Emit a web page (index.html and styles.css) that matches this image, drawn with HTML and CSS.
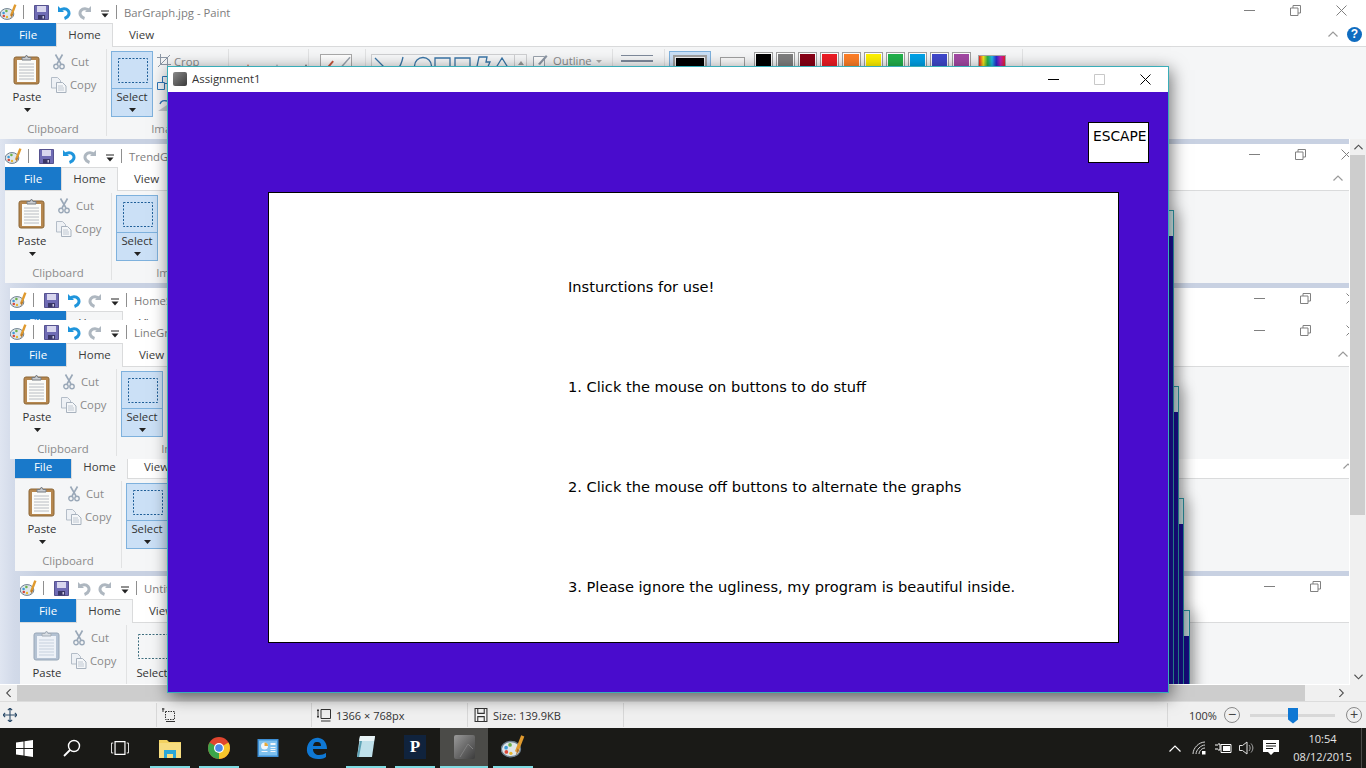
FILE: index.html
```html
<!DOCTYPE html>
<html lang="en">
<head>
<meta charset="utf-8">
<title>Assignment1</title>
<link rel="stylesheet" href="styles.css">
</head>
<body>
<svg class="defs" width="0" height="0" aria-hidden="true">
  <defs>
    <symbol id="i-palette" viewBox="0 0 17 17">
      <ellipse cx="7" cy="10" rx="6.8" ry="5.4" fill="#dfe6ea" stroke="#6d7f8e"/>
      <circle cx="3.6" cy="9" r="1.3" fill="#3f9ad6"/><circle cx="6.4" cy="7" r="1.3" fill="#6cb24a"/><circle cx="3.8" cy="12" r="1.3" fill="#d8483a"/><circle cx="7" cy="13" r="1.2" fill="#e8b62e"/>
      <path d="M15.4 .6 11 12" stroke="#e09a2e" stroke-width="2.4" fill="none"/><path d="M11.6 9.5 10.6 14.5 13 10.6z" fill="#b0702a"/>
    </symbol>
    <symbol id="i-save" viewBox="0 0 15 15">
      <path d="M.5.500h14v14H.5z" fill="#6f6bb4" stroke="#56528f"/><path d="M3 1h9v6H3z" fill="#d8d6ee"/><path d="M4 10h7v4.500H4z" fill="#3a3768"/><path d="M8.500 11h1.500v2.500H8.500z" fill="#c9c7e2"/>
    </symbol>
    <symbol id="i-undo" viewBox="0 0 14 15">
      <path d="M1 1v6h6" fill="#1f95dc"/><path d="M2.500 6C5 3 9 3 11 5.500c2 2.500 1 6.500-3.500 8" fill="none" stroke="#1f95dc" stroke-width="3"/>
    </symbol>
    <symbol id="i-undo-g" viewBox="0 0 14 15">
      <path d="M1 1v6h6" fill="#aeb7c0"/><path d="M2.500 6C5 3 9 3 11 5.500c2 2.500 1 6.500-3.500 8" fill="none" stroke="#aeb7c0" stroke-width="3"/>
    </symbol>
    <symbol id="i-redo" viewBox="0 0 14 15">
      <path d="M13 1v6H7" fill="#aeb7c0"/><path d="M11.500 6C9 3 5 3 3 5.500c-2 2.500-1 6.500 3.500 8" fill="none" stroke="#aeb7c0" stroke-width="3"/>
    </symbol>
    <symbol id="i-qat" viewBox="0 0 8 8">
      <path d="M0 1h8" stroke="#222" stroke-width="1"/><path d="M.5 3.500h7L4 7.500z" fill="#222"/>
    </symbol>
    <symbol id="i-min" viewBox="0 0 11 11"><path d="M0 5.500h11" stroke="currentColor" fill="none"/></symbol>
    <symbol id="i-restore" viewBox="0 0 11 11"><path d="M.5 3h7.500v7.500H.5zM3 3V.5h7.500V8H8" stroke="currentColor" fill="none"/></symbol>
    <symbol id="i-close" viewBox="0 0 11 11"><path d="M.5.500l10 10M10.500.500l-10 10" stroke="currentColor" fill="none"/></symbol>
    <symbol id="i-chev" viewBox="0 0 10 6"><path d="M.5 5.500 5 1l4.500 4.500" stroke="currentColor" fill="none" stroke-width="1.200"/></symbol>
    <symbol id="i-paste" viewBox="0 0 28 31">
      <rect x="1" y="3" width="25" height="27" rx="2" fill="#b6874f" stroke="#8b6636"/>
      <rect x="4" y="6" width="19" height="22" fill="#fbfbf8"/>
      <path d="M6 10h15M6 13h15M6 16h15M6 19h15M6 22h15M6 25h15" stroke="#b8bcc2"/>
      <path d="M9 6V3.500h3L13.500 1 15 3.500h3V6z" fill="#c9ccd0" stroke="#777c82"/>
    </symbol>
    <symbol id="i-paste-g" viewBox="0 0 28 31">
      <rect x="1" y="3" width="25" height="27" rx="2" fill="#b4c2d3" stroke="#98a7b8"/>
      <rect x="4" y="6" width="19" height="22" fill="#eef2f8"/>
      <path d="M6 10h15M6 13h15M6 16h15M6 19h15M6 22h15M6 25h15" stroke="#c6d0dd"/>
      <path d="M9 6V3.500h3L13.500 1 15 3.500h3V6z" fill="#d8dde3" stroke="#a3acb6"/>
    </symbol>
    <symbol id="i-cut" viewBox="0 0 12 16">
      <path d="M2.500 .5 8 10M9.500 .5 4 10" stroke="#9aa8b8" stroke-width="1.600" fill="none"/>
      <circle cx="3" cy="12.500" r="2.200" fill="none" stroke="#9aa8b8" stroke-width="1.400"/><circle cx="9" cy="12.500" r="2.200" fill="none" stroke="#9aa8b8" stroke-width="1.400"/>
    </symbol>
    <symbol id="i-copy" viewBox="0 0 16 16">
      <path d="M.5.500h6l3 3V11H.5z" fill="#eef1f5" stroke="#b4bdc8"/><path d="M5.500 5.500h6l3.500 3.500v6.500H5.500z" fill="#f5f7f9" stroke="#a8b2be"/><path d="M7 9h5M7 11h6M7 13h6" stroke="#c0c8d2"/>
    </symbol>
    <symbol id="i-crop" viewBox="0 0 14 14"><path d="M3.500 0v10.500H14M0 3.500h10.500V14M1 13 13 1" stroke="#8c97a5" fill="none"/></symbol>
    <symbol id="i-resize" viewBox="0 0 14 14"><path d="M.5 6.500h7v7h-7zM5.500 6.500V.5h8v7h-6" stroke="#2f77b8" fill="#f0f5fa"/></symbol>
    <symbol id="i-rotate" viewBox="0 0 14 14"><path d="M1 13 13 5v8z" fill="#c4c9cf"/><path d="M3 6c1-3 4-4 7-3" stroke="#2f77b8" fill="none" stroke-width="1.400"/></symbol>
    <symbol id="i-select" viewBox="0 0 30 25"><path d="M.5.500h29v24H.5z" fill="none" stroke="currentColor" stroke-dasharray="2 1.500"/></symbol>
    <symbol id="i-caret" viewBox="0 0 7 4"><path d="M0 0h7L3.500 4z" fill="#222"/></symbol>
    <symbol id="i-move" viewBox="0 0 13 13"><path d="M6.500 0v13M0 6.500h13M4.500 2 6.500 0l2 2M4.500 11l2 2 2-2M2 4.500 0 6.500l2 2M11 4.500l2 2-2 2" stroke="#2b4a68" fill="none"/></symbol>
    <symbol id="i-sel" viewBox="0 0 14 14"><path d="M3.500 3.500h9v8h-9z" stroke="#333" stroke-dasharray="1.500 1" fill="none"/><path d="M1 0v4M0 1h2.500M4 13.500h9" stroke="#333" fill="none"/></symbol>
    <symbol id="i-dim" viewBox="0 0 14 14"><path d="M4 1.500h9.500v9H4z" stroke="#333" fill="none"/><path d="M1 1v9M0 2.500h2M0 8.500h2M4 13h9.500" stroke="#333" fill="none"/></symbol>
    <symbol id="i-disk" viewBox="0 0 12 13"><path d="M.5.500h11v12H.5z" fill="#f4f4f4" stroke="#333"/><path d="M3 1v4h6V1M3 12V8h6v4" stroke="#333" fill="none"/></symbol>
  </defs>
</svg>

<div class="screen">
  <section class="paint">
    <div class="title-row">
      <svg class="q-pal"><use href="#i-palette"/></svg><span class="q-sep"></span>
      <svg class="q-save"><use href="#i-save"/></svg><svg class="q-undo"><use href="#i-undo"/></svg><svg class="q-redo"><use href="#i-redo"/></svg><svg class="q-drop"><use href="#i-qat"/></svg><span class="q-sep q-sep2"></span>
      <span class="doc-title">BarGraph.jpg - Paint</span>
      <div class="win-ctl"><svg><use href="#i-min"/></svg><svg><use href="#i-restore"/></svg><svg><use href="#i-close"/></svg></div>
    </div>
    <div class="tab-row">
      <span class="tab-file">File</span><span class="tab-home">Home</span><span class="tab-view">View</span>
      <svg class="rib-chev"><use href="#i-chev"/></svg><span class="help">?</span>
    </div>
    <div class="ribbon">
      <div class="group g-clip">
        <div class="g-body">
          <div class="paste"><svg class="paste-ic"><use href="#i-paste"/></svg><span>Paste</span><svg class="caret"><use href="#i-caret"/></svg></div>
          <div class="mini-col">
            <div class="mini"><svg class="ic-cut"><use href="#i-cut"/></svg><span>Cut</span></div>
            <div class="mini"><svg class="ic-copy"><use href="#i-copy"/></svg><span>Copy</span></div>
          </div>
        </div>
        <div class="g-label">Clipboard</div>
      </div>
      <div class="group g-image">
        <div class="g-body">
          <div class="select"><div class="sel-top"><svg class="sel-ic"><use href="#i-select"/></svg></div><div class="sel-bot"><span>Select</span><svg class="caret"><use href="#i-caret"/></svg></div></div>
          <div class="img-col">
            <div class="mini"><svg class="ic-img"><use href="#i-crop"/></svg><span>Crop</span></div>
            <div class="mini"><svg class="ic-img"><use href="#i-resize"/></svg><span>Resize</span></div>
            <div class="mini"><svg class="ic-img"><use href="#i-rotate"/></svg><span>Rotate</span></div>
          </div>
        </div>
        <div class="g-label">Image</div>
      </div>
      <div class="group g-tools"><div class="g-body"><span class="tool tool-r"></span><span class="tool"></span><span class="tool tool-d"></span></div></div>
      <div class="group g-brush"><div class="g-body"><div class="brush"><svg class="brush-ic" viewBox="0 0 32 14"><path d="M8 12 13 6" stroke="#c8553d" stroke-width="2" fill="none"/><path d="M22 12 31 2" stroke="#9aa3ad" stroke-width="1.500" fill="none"/></svg></div></div></div>
      <div class="group g-shapes"><div class="g-body">
        <div class="shapes"><svg class="shapes-ic" viewBox="0 0 142 20"><g stroke="#3a76a8" fill="none" stroke-width="1.300"><path d="M3 3 16 16M19 16c2-4 4-3 6-1 3-3 5-8 6-13"/><circle cx="51" cy="11" r="8.500"/><path d="M63 3h15v15H63zM83 3h15v12q0 3-3 3H86q-3 0-3-3zM104 16l3-14h8l-1 5h4l-4 9zM122 16l8-13 8 13z"/></g></svg><span class="shapes-sb"><i></i></span></div>
        <div class="outline"><svg class="outline-ic" viewBox="0 0 15 15"><path d="M.5 2.500h11v12H.5z" fill="#fff" stroke="#9aa3ad"/><path d="M5 10 13 1l1.500 1.500L7 11z" fill="#8c97a5"/></svg><span>Outline</span><i class="tiny-caret"></i></div>
      </div></div>
      <div class="group g-size"><div class="g-body"><div class="size-lines"><span></span><span class="thick"></span></div></div></div>
      <div class="group g-colors"><div class="g-body">
        <div class="color1"><span></span></div>
        <div class="color2"></div>
        <div class="swatches">
          <span class="sw sw-black"></span><span class="sw sw-gray"></span><span class="sw sw-maroon"></span><span class="sw sw-red"></span><span class="sw sw-orange"></span><span class="sw sw-yellow"></span><span class="sw sw-green"></span><span class="sw sw-blue"></span><span class="sw sw-indigo"></span><span class="sw sw-purple"></span>
        </div>
        <div class="rainbow"></div>
      </div></div>
    </div>
  </section>

  <div class="main">
    <div class="canvas">
      <section class="paint nested n2">
        <div class="title-row">
          <svg class="q-pal"><use href="#i-palette"/></svg><span class="q-sep"></span>
          <svg class="q-save"><use href="#i-save"/></svg><svg class="q-undo"><use href="#i-undo"/></svg><svg class="q-redo"><use href="#i-redo"/></svg><svg class="q-drop"><use href="#i-qat"/></svg><span class="q-sep q-sep2"></span>
          <span class="doc-title">TrendGraph.jpg - Paint</span>
          <div class="win-ctl"><svg><use href="#i-min"/></svg><svg><use href="#i-restore"/></svg><svg><use href="#i-close"/></svg></div>
        </div>
        <div class="tab-row"><span class="tab-file">File</span><span class="tab-home">Home</span><span class="tab-view">View</span><svg class="rib-chev"><use href="#i-chev"/></svg></div>
        <div class="ribbon">
          <div class="group g-clip"><div class="g-body"><div class="paste"><svg class="paste-ic"><use href="#i-paste"/></svg><span>Paste</span><svg class="caret"><use href="#i-caret"/></svg></div><div class="mini-col"><div class="mini"><svg class="ic-cut"><use href="#i-cut"/></svg><span>Cut</span></div><div class="mini"><svg class="ic-copy"><use href="#i-copy"/></svg><span>Copy</span></div></div></div><div class="g-label">Clipboard</div></div>
          <div class="group g-image"><div class="g-body"><div class="select"><div class="sel-top"><svg class="sel-ic"><use href="#i-select"/></svg></div><div class="sel-bot"><span>Select</span><svg class="caret"><use href="#i-caret"/></svg></div></div></div><div class="g-label">Image</div></div>
        </div>
      </section>

      <section class="paint nested n3">
        <div class="title-row">
          <svg class="q-pal"><use href="#i-palette"/></svg><span class="q-sep"></span>
          <svg class="q-save"><use href="#i-save"/></svg><svg class="q-undo"><use href="#i-undo"/></svg><svg class="q-redo"><use href="#i-redo"/></svg><svg class="q-drop"><use href="#i-qat"/></svg><span class="q-sep q-sep2"></span>
          <span class="doc-title">HomeScreen.jpg - Paint</span>
          <div class="win-ctl"><svg><use href="#i-min"/></svg><svg><use href="#i-restore"/></svg><svg><use href="#i-close"/></svg></div>
        </div>
        <div class="tab-row"><span class="tab-file">File</span><span class="tab-home">Home</span><span class="tab-view">View</span></div>
      </section>

      <section class="paint nested n5">
        <div class="title-row"></div>
        <div class="tab-row"><span class="tab-file">File</span><span class="tab-home">Home</span><span class="tab-view">View</span><svg class="rib-chev"><use href="#i-chev"/></svg></div>
        <div class="ribbon">
          <div class="group g-clip"><div class="g-body"><div class="paste"><svg class="paste-ic"><use href="#i-paste"/></svg><span>Paste</span><svg class="caret"><use href="#i-caret"/></svg></div><div class="mini-col"><div class="mini"><svg class="ic-cut"><use href="#i-cut"/></svg><span>Cut</span></div><div class="mini"><svg class="ic-copy"><use href="#i-copy"/></svg><span>Copy</span></div></div></div><div class="g-label">Clipboard</div></div>
          <div class="group g-image"><div class="g-body"><div class="select"><div class="sel-top"><svg class="sel-ic"><use href="#i-select"/></svg></div><div class="sel-bot"><span>Select</span><svg class="caret"><use href="#i-caret"/></svg></div></div></div><div class="g-label">Image</div></div>
        </div>
      </section>

      <section class="paint nested n4">
        <div class="title-row">
          <svg class="q-pal"><use href="#i-palette"/></svg><span class="q-sep"></span>
          <svg class="q-save"><use href="#i-save"/></svg><svg class="q-undo"><use href="#i-undo"/></svg><svg class="q-redo"><use href="#i-redo"/></svg><svg class="q-drop"><use href="#i-qat"/></svg><span class="q-sep q-sep2"></span>
          <span class="doc-title">LineGraph.jpg - Paint</span>
          <div class="win-ctl"><svg><use href="#i-min"/></svg><svg><use href="#i-restore"/></svg><svg><use href="#i-close"/></svg></div>
        </div>
        <div class="tab-row"><span class="tab-file">File</span><span class="tab-home">Home</span><span class="tab-view">View</span><svg class="rib-chev"><use href="#i-chev"/></svg></div>
        <div class="ribbon">
          <div class="group g-clip"><div class="g-body"><div class="paste"><svg class="paste-ic"><use href="#i-paste"/></svg><span>Paste</span><svg class="caret"><use href="#i-caret"/></svg></div><div class="mini-col"><div class="mini"><svg class="ic-cut"><use href="#i-cut"/></svg><span>Cut</span></div><div class="mini"><svg class="ic-copy"><use href="#i-copy"/></svg><span>Copy</span></div></div></div><div class="g-label">Clipboard</div></div>
          <div class="group g-image"><div class="g-body"><div class="select"><div class="sel-top"><svg class="sel-ic"><use href="#i-select"/></svg></div><div class="sel-bot"><span>Select</span><svg class="caret"><use href="#i-caret"/></svg></div></div></div><div class="g-label">Image</div></div>
        </div>
      </section>

      <section class="paint nested n6">
        <div class="title-row">
          <svg class="q-pal"><use href="#i-palette"/></svg><span class="q-sep"></span>
          <svg class="q-save"><use href="#i-save"/></svg><svg class="q-undo"><use href="#i-undo-g"/></svg><svg class="q-redo"><use href="#i-redo"/></svg><svg class="q-drop"><use href="#i-qat"/></svg><span class="q-sep q-sep2"></span>
          <span class="doc-title">Untitled - Paint</span>
          <div class="win-ctl"><svg><use href="#i-min"/></svg><svg><use href="#i-restore"/></svg><svg><use href="#i-close"/></svg></div>
        </div>
        <div class="tab-row"><span class="tab-file">File</span><span class="tab-home">Home</span><span class="tab-view">View</span></div>
        <div class="ribbon">
          <div class="group g-clip"><div class="g-body"><div class="paste"><svg class="paste-ic"><use href="#i-paste-g"/></svg><span>Paste</span><svg class="caret"><use href="#i-caret"/></svg></div><div class="mini-col"><div class="mini"><svg class="ic-cut"><use href="#i-cut"/></svg><span>Cut</span></div><div class="mini"><svg class="ic-copy"><use href="#i-copy"/></svg><span>Copy</span></div></div></div></div>
          <div class="group g-image"><div class="g-body"><div class="select sel-off"><div class="sel-top"><svg class="sel-ic"><use href="#i-select"/></svg></div><div class="sel-bot"><span>Select</span><svg class="caret"><use href="#i-caret"/></svg></div></div></div></div>
        </div>
      </section>

      <div class="peek p4"></div>
      <div class="peek p3"></div>
      <div class="peek p2"></div>
      <div class="peek p1"></div>
    </div>
    <div class="vscroll">
      <span class="sb-btn"><svg class="sb-up"><use href="#i-chev"/></svg></span>
      <span class="v-thumb"></span>
      <span class="sb-fill"></span>
      <span class="sb-btn"><svg class="sb-down"><use href="#i-chev"/></svg></span>
    </div>
  </div>

  <div class="hscroll">
    <span class="h-btn"><svg class="sb-left"><use href="#i-chev"/></svg></span>
    <span class="h-thumb"></span>
    <span class="sb-fill"></span>
    <span class="h-btn"><svg class="sb-right"><use href="#i-chev"/></svg></span>
    <span class="h-corner"></span>
  </div>

  <footer class="status">
    <div class="st st1"><svg class="st-ic"><use href="#i-move"/></svg></div>
    <div class="st st2"><svg class="st-ic"><use href="#i-sel"/></svg></div>
    <div class="st st3"><svg class="st-ic"><use href="#i-dim"/></svg><span>1366 × 768px</span></div>
    <div class="st st4"><svg class="st-ic"><use href="#i-disk"/></svg><span>Size: 139.9KB</span></div>
    <div class="st st5"></div>
    <div class="st st6">
      <span class="zoom-pct">100%</span>
      <span class="zoom-btn">−</span>
      <span class="zoom-track"><i class="zoom-thumb"></i></span>
      <span class="zoom-btn zoom-plus">+</span>
    </div>
  </footer>

  <nav class="taskbar">
    <div class="tb-sys"><svg viewBox="0 0 17 17" class="tb-start"><path d="M0 2.500 7.500 1.400V8H0zM8.500 1.200 17 0v8H8.500zM0 9h7.500v6.600L0 14.500zM8.500 9H17v8L8.500 15.800z" fill="#fff"/></svg></div>
    <div class="tb-sys"><svg viewBox="0 0 18 18" class="tb-ic"><circle cx="11" cy="7" r="5.500" fill="none" stroke="#fff" stroke-width="1.400"/><path d="M7 11 1 17" stroke="#fff" stroke-width="1.800"/></svg></div>
    <div class="tb-sys tb-last"><svg viewBox="0 0 20 16" class="tb-ic"><path d="M4.500 1h11v14h-11z" fill="none" stroke="#fff" stroke-width="1.300"/><path d="M2.500 2.500H.5v11h2M17.500 2.500h2v11h-2" fill="none" stroke="#fff"/></svg></div>
    <div class="tb-app on"><svg viewBox="0 0 22 20" class="tb-app-ic"><path d="M0 2h8l2 2h12v16H0z" fill="#f3d260"/><path d="M0 5h22v15H0z" fill="#f7dd80"/><path d="M5 12h12v8h-3v-4H8v4H5z" fill="#2aa7d8"/></svg></div>
    <div class="tb-app on"><svg viewBox="0 0 22 22" class="tb-app-ic"><circle cx="11" cy="11" r="11" fill="#e0452f"/><path d="M11 11 1.500 5.500A11 11 0 0 0 11 22z" fill="#3ba54a"/><path d="M11 11V22A11 11 0 0 0 20.500 5.500z" fill="#f7c52b"/><circle cx="11" cy="11" r="5" fill="#fff"/><circle cx="11" cy="11" r="3.800" fill="#4b88e8"/></svg></div>
    <div class="tb-app"><svg viewBox="0 0 21 18" class="tb-app-ic tb-cp"><path d="M0 0h21v18H0z" fill="#3d8fd6"/><path d="M1.500 1.500h18v15h-18z" fill="#7fc1ee"/><circle cx="7" cy="7" r="3.500" fill="#f2f6fa"/><path d="M7 7V3.500A3.500 3.500 0 0 1 10.500 7z" fill="#e8a83a"/><path d="M13 4h5v2h-5zM13 8h5v1h-5zM13 10h5v1h-5zM13 12h5v1h-5zM4 12h6v1H4z" fill="#f2f6fa"/></svg></div>
    <div class="tb-app"><svg viewBox="0 0 22 22" class="tb-app-ic"><path d="M1 11C2 4 8 0 13 1c5 1 8 5 8 11H7c0 4 3 6 6 6 3 0 5-1 7-2v4c-3 2-5 2-8 2C5 22 0 18 1 11zM7 9h8c0-3-1-4-4-4S8 6 7 9z" fill="#0f78d4"/></svg></div>
    <div class="tb-app on"><svg viewBox="0 0 20 24" class="tb-app-ic tb-note"><path d="M4 1h15l-3 21H1z" fill="#bfe0ea"/><path d="M4 1h15l-1 5H3z" fill="#e8f3f6"/><path d="M1 22 4 6h2L3 22z" fill="#5da2b5"/></svg></div>
    <div class="tb-app on"><span class="tb-p">P</span></div>
    <div class="tb-app active"><svg viewBox="0 0 21 24" class="tb-app-ic tb-pro"><defs><linearGradient id="gr" x1="0" y1="0" x2="1" y2="1"><stop offset="0" stop-color="#9a9a9a"/><stop offset="1" stop-color="#3b3b3b"/></linearGradient></defs><rect width="21" height="24" rx="2" fill="url(#gr)"/><path d="M6 22 14 9l5 5" stroke="#7f7f7f" fill="none"/></svg></div>
    <div class="tb-app on"><svg class="tb-app-ic tb-paint"><use href="#i-palette"/></svg></div>
    <div class="tray">
      <span class="tr"><svg viewBox="0 0 12 7" class="tr-chev"><path d="M.5 6.500 6 1l5.500 5.500" stroke="#fff" fill="none" stroke-width="1.200"/></svg></span>
      <span class="tr"><svg viewBox="0 0 14 14" class="tr-ic"><path d="M1 13C1 7 7 1 13 1M4 13c0-4 5-9 9-9M7 13c0-3 3-6 6-6" stroke="#d8d8d8" fill="none"/><path d="M10 10h3.500v3.500H10z" fill="#fff"/></svg></span>
      <span class="tr"><svg viewBox="0 0 17 12" class="tr-bat"><path d="M0 3h3M0 7h3M3 2h2v6H3" stroke="#fff" fill="none"/><path d="M6 2.500h10v8H6z" fill="none" stroke="#fff"/><path d="M8 4h7v5H8z" fill="#fff"/></svg></span>
      <span class="tr"><svg viewBox="0 0 16 14" class="tr-vol"><path d="M.5 4.500h3L8 1v12L3.500 9.500h-3z" fill="none" stroke="#e4e4e4"/><path d="M10 4c1.500 2 1.500 4 0 6M12 2.500c2.500 3 2.500 6 0 9" fill="none" stroke="#aaa"/></svg></span>
      <span class="tr"><svg viewBox="0 0 16 16" class="tr-note"><path d="M0 0h16v12h-5l-3 3-3-3H0z" fill="#fff"/><path d="M3 3.500h10M3 6h10M3 8.500h7" stroke="#1a1a18"/></svg></span>
      <div class="clock"><span>10:54</span><span>08/12/2015</span></div>
      <span class="show-desktop"></span>
    </div>
  </nav>

  <section class="app-win">
    <header class="app-title">
      <span class="app-icon"></span><span class="app-name">Assignment1</span>
      <div class="app-ctl"><svg class="c-min"><use href="#i-min"/></svg><svg class="c-max" viewBox="0 0 11 11"><path d="M.5.500h10v10H.5z" stroke="#c8c8c8" fill="none"/></svg><svg class="c-close"><use href="#i-close"/></svg></div>
    </header>
    <div class="app-body">
      <div class="escape">ESCAPE</div>
      <div class="panel">
        <p>Insturctions for use!</p>
        <p>1. Click the mouse on buttons to do stuff</p>
        <p>2. Click the mouse off buttons to alternate the graphs</p>
        <p>3. Please ignore the ugliness, my program is beautiful inside.</p>
      </div>
    </div>
  </section>
</div>
</body>
</html>
```

FILE: styles.css
```css
* { box-sizing: border-box; }
html, body { margin: 0; padding: 0; overflow: hidden; }
.defs { position: absolute; }
svg { display: block; flex: none; }
.screen {
  position: relative; width: 1366px; height: 768px; overflow: hidden;
  display: flex; flex-direction: column; background: #fff;
  font-family: "Open Sans", "Noto Sans", sans-serif; font-size: 11.3px; color: #3c3c3c;
}

/* Paint window chrome */
.paint { width: 1366px; height: 139px; flex: none; background: #fff; }
.title-row { height: 23px; padding-top: 1px; display: flex; align-items: center; color: #7d7d7d; font-size: 11.3px; }
.q-pal { width: 17px; height: 17px; }
.q-sep { width: 1px; height: 14px; background: #8f8f8f; margin-left: 6px; }
.q-save { width: 15px; height: 15px; margin-left: 10px; }
.q-undo { width: 14px; height: 15px; margin-left: 8px; }
.q-redo { width: 14px; height: 15px; margin-left: 7px; }
.q-drop { width: 8px; height: 8px; margin-left: 9px; margin-top: 3px; }
.q-sep2 { margin-left: 7px; }
.doc-title { margin-left: 7px; white-space: nowrap; }
.win-ctl { margin-left: auto; margin-bottom: 4px; display: flex; gap: 35px; padding-right: 19px; color: #808080; }
.win-ctl svg { width: 11px; height: 11px; }

.tab-row { height: 24px; display: flex; align-items: stretch; border-bottom: 1px solid #dadbdc; line-height: 24px; font-size: 11.5px; }
.tab-file { width: 56px; background: #1979ca; color: #fff; text-align: center; }
.tab-home { width: 57px; text-align: center; background: #f5f6f7; border: 1px solid #dadbdc; border-bottom: 0; margin-bottom: -1px; line-height: 22px; }
.tab-view { width: 57px; text-align: center; }
.rib-chev { width: 10px; height: 6px; color: #9a9a9a; margin: 8px 28px 0 auto; }
.help {
  width: 15px; height: 15px; border-radius: 50%; background: #0f6cc0; color: #fff;
  font: bold 12px/15px "Liberation Sans", sans-serif; text-align: center; margin: 4px 4px 0 -19px;
}

.ribbon { height: 92px; background: #f5f6f7; padding: 2px 0 3px; display: flex; }
.group { display: flex; flex-direction: column; flex: none; border-right: 1px solid #e1e2e3; }
.g-body { flex: 1; display: flex; min-height: 0; }
.g-label { height: 15px; line-height: 15px; text-align: center; color: #8b8b8b; font-size: 11.4px; }
.g-clip { width: 107px; }
.g-image { width: 122px; }
.g-tools { width: 80px; }
.g-brush { width: 57px; }
.g-shapes { width: 247px; }
.g-size { width: 52px; }
.g-colors { width: 358px; }

.paste { width: 30px; margin-left: 12px; display: flex; flex-direction: column; align-items: center; padding-top: 5px; color: #333; }
.paste-ic { width: 28px; height: 31px; }
.paste span { margin-top: 4px; line-height: 16px; }
.caret { width: 7px; height: 4px; margin-top: 3px; }
.mini-col { margin-left: 11px; padding-top: 1px; }
.mini { height: 23px; display: flex; align-items: center; color: #8a8a8a; gap: 6px; }
.ic-cut { width: 12px; height: 16px; }
.ic-copy { width: 16px; height: 16px; margin: 0 -3px 0 -2px; }

.select { width: 42px; height: 66px; margin: 2px 0 0 4px; background: #cbe0f6; border: 1px solid #7eb1dd; color: #333; display: flex; flex-direction: column; }
.sel-top { height: 37px; border-bottom: 1px solid #7eb1dd; padding: 6px 0 0 6px; color: #1f5f98; }
.sel-ic { width: 30px; height: 25px; }
.sel-bot { flex: 1; display: flex; flex-direction: column; align-items: center; line-height: 16px; }
.sel-off { background: transparent; border-color: transparent; }
.sel-off .sel-top { border-color: transparent; color: #3f6f7f; }
.img-col { margin-left: 4px; padding-top: 1px; }
.img-col .mini { height: 22px; gap: 3px; }
.ic-img { width: 14px; height: 14px; }

.g-tools .g-body { gap: 25px; padding: 15px 0 0 17px; }
.tool { width: 5px; height: 5px; background: #9aa3ad; clip-path: polygon(50% 0, 100% 100%, 0 100%); }
.tool-r { background: #c8553d; }
.tool-d { background: #444; }
.brush { width: 32px; height: 40px; margin: 5px 0 0 11px; border: 1px solid #a9a9a9; background: linear-gradient(#fff, #f0f0f0); }
.brush-ic { width: 30px; height: 14px; }
.g-shapes .g-body { padding: 5px 0 0 5px; }
.shapes { width: 156px; height: 60px; display: flex; border: 1px solid #cfd0d2; background: #f7f8f9; }
.shapes-ic { width: 142px; height: 20px; }
.shapes-sb { flex: 1; border-left: 1px solid #cfd0d2; display: flex; justify-content: center; padding-top: 6px; }
.shapes-sb i { width: 0; height: 0; border: 3.5px solid transparent; border-bottom: 4px solid #999; border-top: 0; }
.outline { display: flex; gap: 5px; margin-left: 6px; color: #8a8a8a; align-items: flex-start; line-height: 14px; }
.outline-ic { width: 15px; height: 15px; }
.tiny-caret { width: 0; height: 0; border: 3px solid transparent; border-top: 3px solid #aaa; border-bottom: 0; margin-top: 6px; margin-left: -1px; }
.size-lines { margin: 6px 0 0 8px; width: 32px; display: flex; flex-direction: column; gap: 4px; }
.size-lines span { height: 1px; background: #7f8a9c; }
.size-lines .thick { height: 2px; }
.g-colors .g-body { padding: 2px 0 0 4px; align-items: flex-start; }
.color1 { width: 42px; height: 60px; background: #cbe0f6; border: 1px solid #7eb1dd; padding: 3px; }
.color1 span { display: block; width: 34px; height: 34px; background: #000; border: 2px solid #a0a0a0; outline: 1px solid #f0f0f0; outline-offset: -3px; }
.color2 { width: 25px; height: 30px; margin: 6px 0 0 9px; border: 1px solid #a0a0a0; background: #fbfbfb; }
.swatches { display: flex; gap: 3px; margin-left: 9px; margin-top: 1px; }
.sw { width: 19px; height: 19px; border: 1px solid #a0a0a0; outline: 1px solid #fff; outline-offset: -2px; }
.sw-black { background: #000; } .sw-gray { background: #7f7f7f; } .sw-maroon { background: #880015; }
.sw-red { background: #ed1c24; } .sw-orange { background: #ff7f27; } .sw-yellow { background: #fff200; }
.sw-green { background: #22b14c; } .sw-blue { background: #00a2e8; } .sw-indigo { background: #3f48cc; } .sw-purple { background: #a349a4; }
.rainbow { width: 28px; height: 26px; margin: 4px 0 0 7px; border: 1px solid #a9a9a9; background: linear-gradient(90deg, #e8202a, #f5e71a, #22b14c, #1fb6e8, #2a2ad0, #c01fb0, #e8202a); }

/* Work area */
.main { height: 546px; display: flex; flex: none; }
.canvas { position: relative; width: 1350px; height: 546px; overflow: hidden; border-right: 1px solid #fff; border-bottom: 1px solid #fff; background: linear-gradient(90deg, #dfe5f1, #d2dae9 14px, #c8d1e2 40px); }
.nested { position: absolute; }
.n2 { left: 5px; top: 5px; }
.n3 { left: 10px; top: 149px; height: 32px; overflow: hidden; }
.n4 { left: 10px; top: 181px; }
.n5 { left: 15px; top: 293px; }
.n6 { left: 20px; top: 437px; }

.peek { position: absolute; bottom: -10px; background: #1c109c; border: 1px solid #2e9aa8; box-shadow: 4px 2px 14px rgba(0,0,0,.4); }
.peek::before { content: ""; display: block; height: 25px; background: #d4ecee; }
.p1 { left: 1167px; top: 71px; width: 7px; }
.p2 { left: 1173px; top: 247px; width: 6px; }
.p3 { left: 1178px; top: 359px; width: 6px; }
.p4 { left: 1183px; top: 471px; width: 7px; }

.vscroll { width: 16px; height: 546px; background: #f0f0f0; display: flex; flex-direction: column; }
.sb-btn { height: 16px; display: flex; align-items: center; justify-content: center; flex: none; color: #505050; }
.v-thumb { height: 360px; width: 15px; background: #cdcdcd; flex: none; }
.sb-fill { flex: 1; }
.sb-up, .sb-down { width: 9px; height: 6px; }
.sb-down { transform: rotate(180deg); }

.hscroll { height: 17px; flex: none; display: flex; background: #f0f0f0; border-bottom: 1px solid #dcdcdc; }
.h-btn { width: 17px; display: flex; align-items: center; justify-content: center; color: #505050; }
.h-thumb { width: 1288px; background: #cdcdcd; }
.h-corner { width: 16px; background: #f0f0f0; }
.sb-left, .sb-right { width: 9px; height: 6px; }
.sb-left { transform: rotate(-90deg); }
.sb-right { transform: rotate(90deg); }

/* Status bar */
.status { height: 26px; flex: none; display: flex; background: #f0f0f0; font-size: 11px; color: #333; }
.st { display: flex; align-items: center; border-right: 1px solid #d8d8d8; height: 24px; margin-top: 1px; gap: 5px; }
.st-ic { width: 14px; height: 14px; }
.st1 { width: 157px; padding-left: 3px; }
.st2 { width: 155px; padding-left: 5px; }
.st3 { width: 156px; padding-left: 5px; }
.st4 { width: 156px; padding-left: 6px; }
.st5 { width: 544px; }
.st6 { flex: 1; border-right: 0; padding-left: 21px; gap: 0; }
.zoom-pct { width: 35px; }
.zoom-btn { width: 16px; height: 16px; border: 1px solid #8a8a8a; border-radius: 50%; font: 14px/13px "Liberation Sans", sans-serif; text-align: center; color: #444; }
.zoom-track { position: relative; width: 85px; height: 3px; background: #d8d8d8; margin-left: 10px; }
.zoom-thumb { position: absolute; left: 38px; top: -6px; width: 10px; height: 16px; background: #0f78d4; clip-path: polygon(0 0, 100% 0, 100% 75%, 50% 100%, 0 75%); }
.zoom-plus { margin-left: 11px; }

/* Taskbar */
.taskbar { height: 40px; flex: none; display: flex; background: #1a1a17; }
.tb-sys { width: 48px; display: flex; align-items: center; justify-content: center; }
.tb-last { margin-right: 2px; }
.tb-start { width: 17px; height: 17px; }
.tb-ic { width: 18px; height: 18px; }
.tb-app { width: 48px; margin-right: 1px; display: flex; flex-direction: column; align-items: center; padding-top: 9px; }
.tb-app::after { content: ""; width: 40px; height: 2px; margin-top: auto; }
.tb-app.on::after, .tb-app.active::after { background: #7fdbe2; }
.tb-app.active { background: #4b4b48; }
.tb-app.active::after { width: 48px; }
.tb-app-ic { width: 22px; height: 22px; }
.tb-cp { height: 18px; margin-top: 2px; }
.tb-note { width: 20px; height: 24px; margin-top: -2px; }
.tb-pro { width: 21px; height: 24px; margin-top: -2px; }
.tb-paint { width: 24px; height: 24px; margin-top: -2px; }
.tb-p { width: 22px; height: 24px; margin-top: -2px; background: #10233d; color: #fff; font: bold 17px/24px "Liberation Serif", serif; text-align: center; }
.tray { margin-left: auto; display: flex; align-items: center; height: 40px; }
.tr { width: 24px; display: flex; justify-content: center; }
.tr-chev { width: 12px; height: 7px; }
.tr-ic { width: 14px; height: 14px; }
.tr-bat { width: 17px; height: 12px; }
.tr-vol { width: 16px; height: 14px; }
.tr-note { width: 16px; height: 16px; }
.clock { width: 77px; margin-left: 1px; display: flex; flex-direction: column; align-items: center; color: #e4e4e4; font-size: 11px; line-height: 18px; }
.show-desktop { width: 5px; height: 40px; border-left: 1px solid #4a4a48; }

/* Foreground app window */
.app-win {
  position: absolute; left: 167px; top: 66px; width: 1002px; height: 627px;
  border: 1px solid #39adb8; background: #fff; display: flex; flex-direction: column;
  box-shadow: 2px 4px 16px rgba(0,0,0,.55);
}
.app-title { height: 25px; flex: none; display: flex; align-items: center; color: #333; font-size: 11.4px; }
.app-icon { width: 14px; height: 14px; margin-left: 5px; margin-top: -1px; border-radius: 2px; background: linear-gradient(135deg, #8a8a8a, #3a3a3a); }
.app-name { margin-left: 5px; margin-top: -2px; }
.app-ctl { margin-left: auto; display: flex; gap: 35px; padding-right: 17px; margin-top: -1px; color: #000; }
.app-ctl svg { width: 11px; height: 11px; }
.app-body { flex: 1; background: #490ccd; display: flex; flex-direction: column; }
.escape {
  align-self: flex-end; width: 61px; height: 41px; margin: 30px 19px 0 0; padding: 4px 0 0 4px;
  background: #fff; border: 1px solid #000; color: #000; white-space: nowrap;
  font: 13.8px/18px "DejaVu Sans", sans-serif;
}
.panel { width: 851px; height: 451px; margin: 29px 0 0 100px; background: #fff; border: 1px solid #000; padding: 44px 0 0 299px; color: #000; }
.panel p { margin: 0; height: 100px; font: 14.6px/100px "DejaVu Sans", sans-serif; white-space: nowrap; }
```
